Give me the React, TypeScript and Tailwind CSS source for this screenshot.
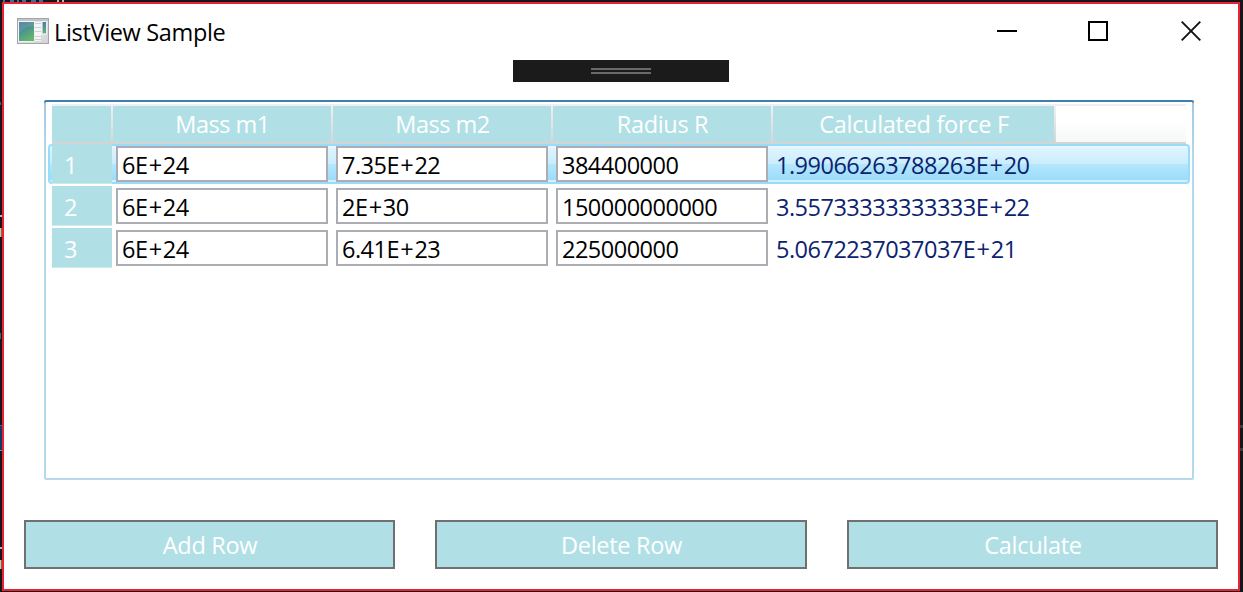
import React from "react";

const columns = [
  { title: "", width: "w-[59px]", tracking: "" },
  { title: "Mass m1", width: "w-[218px]", tracking: "tracking-[-0.5px]" },
  { title: "Mass m2", width: "w-[218px]", tracking: "tracking-[-0.5px]" },
  { title: "Radius R", width: "w-[218px]", tracking: "tracking-[-0.35px]" },
  { title: "Calculated force F", width: "w-[281px]", tracking: "tracking-[-0.3px]" },
];

const rows = [
  { values: ["6E+24", "7.35E+22", "384400000"], force: "1.99066263788263E+20" },
  { values: ["6E+24", "2E+30", "150000000000"], force: "3.55733333333333E+22" },
  { values: ["6E+24", "6.41E+23", "225000000"], force: "5.0672237037037E+21" },
];

const actions = [
  { label: "Add Row", width: "w-[371px]" },
  { label: "Delete Row", width: "w-[372px]" },
  { label: "Calculate", width: "w-[371px]" },
];

function Numeric({ value }: { value: string }) {
  const [mantissa, exponent] = value.split("E+");
  return (
    <>
      {mantissa}
      {exponent && (
        <>
          <span className="tracking-[0.7px]">E+</span>
          {exponent}
        </>
      )}
    </>
  );
}

function AppIcon() {
  return (
    <svg width="32" height="26" viewBox="0 0 32 26" className="block">
      <defs>
        <linearGradient id="pane" x1="0" y1="0" x2="0.5" y2="1">
          <stop offset="0" stopColor="#4674a6" />
          <stop offset="0.5" stopColor="#4c9490" />
          <stop offset="1" stopColor="#62b56c" />
        </linearGradient>
        <linearGradient id="frame" x1="0" y1="0" x2="1" y2="1">
          <stop offset="0" stopColor="#f4f4f4" />
          <stop offset="1" stopColor="#d0d2d6" />
        </linearGradient>
        <linearGradient id="bar" x1="0" y1="0" x2="0" y2="1">
          <stop offset="0" stopColor="#4a7cab" />
          <stop offset="1" stopColor="#63b577" />
        </linearGradient>
      </defs>
      <rect x="0.5" y="0.5" width="31" height="25" fill="url(#frame)" stroke="#a3a5a9" />
      <rect x="1" y="1" width="30" height="2" fill="#c3c5c8" />
      <rect x="1.5" y="3.5" width="16" height="20" fill="#fff" />
      <rect x="2" y="4" width="15" height="19" fill="url(#pane)" />
      <path d="M2 15C7 9 12 8 17 8V4H2z" fill="#fff" opacity="0.1" />
      <rect x="18" y="4" width="6" height="19" fill="#f5f5f5" />
      <path d="M18 5.5h6M18 9.5h6M18 13.5h6M18 18.5h6M18 21.5h6" stroke="#cfd0d2" />
      <rect x="24.5" y="3.5" width="5" height="13" fill="#fff" />
      <rect x="25.5" y="4" width="3.5" height="11.5" fill="url(#bar)" />
    </svg>
  );
}

function WindowButtons() {
  return (
    <div className="flex items-center pt-[17px]">
      <svg width="20" height="20" className="mr-[71px] block">
        <path d="M0 10h20" stroke="#000" strokeWidth="2" />
      </svg>
      <svg width="20" height="20" className="mr-[73px] block">
        <rect x="1" y="1" width="18" height="18" fill="none" stroke="#000" strokeWidth="2" />
      </svg>
      <svg width="20" height="20" className="mr-[37px] block">
        <path d="M0.7 0.7l18.6 18.6M19.3 0.7L0.7 19.3" stroke="#111" strokeWidth="1.9" />
      </svg>
    </div>
  );
}

function BackdropEdge() {
  return (
    <svg width="2" height="592" className="block shrink-0">
      <rect y="102" width="1" height="3" fill="#2b6a85" />
      <rect y="215" width="2" height="2" fill="#b8b8b0" />
      <rect y="228" width="1" height="9" fill="#c9c4b0" />
      <rect x="1" y="228" width="1" height="9" fill="#8a6a35" />
      <rect y="333" width="1" height="6" fill="#2b7285" />
      <rect y="425" width="2" height="26" fill="#123a66" />
      <rect y="425" width="2" height="1" fill="#566478" />
      <rect y="450" width="2" height="1" fill="#7890a8" />
      <rect y="547" width="2" height="2" fill="#b8b8b0" />
      <rect y="560" width="1" height="9" fill="#c9c4b0" />
      <rect x="1" y="560" width="1" height="9" fill="#8a6a35" />
    </svg>
  );
}

export default function App() {
  return (
    <div className="flex h-[592px] w-[1243px] flex-col overflow-hidden bg-[#161616] font-['Open_Sans','Noto_Sans',sans-serif] text-[23.5px] leading-[32px]">
      <svg width="1243" height="2" className="block shrink-0">
        <path d="M3 1h2M10 1h4M17 1h2M22 1h4M31 1h5M39 1h4" stroke="#3f6f9c" strokeWidth="2" />
        <path d="M57 1h2M62 1h2" stroke="#b9b9a8" strokeWidth="2" />
      </svg>
      <div className="-mt-[2px] flex h-[592px]">
        <BackdropEdge />
        <main className="mt-[2px] flex h-[589px] w-[1238px] flex-col border-2 border-[#ea2238] bg-white">
          <header className="flex h-[56px] shrink-0 items-start">
            <div className="ml-[13px] mt-[14px]">
              <AppIcon />
            </div>
            <h1 className="ml-[5px] mt-[12px] flex-1 tracking-[-0.33px] text-black">ListView Sample</h1>
            <WindowButtons />
          </header>

          <div className="ml-[509px] flex h-[22px] w-[216px] shrink-0 flex-col items-center gap-[2px] bg-[#1b1b1b] pt-[8px]">
            <div className="h-[2px] w-[60px] bg-[#6a6a6a]" />
            <div className="h-[2px] w-[60px] bg-[#6a6a6a]" />
          </div>

          <section className="ml-[40px] mt-[18px] h-[380px] w-[1150px] shrink-0 rounded-[2px] bg-[linear-gradient(to_bottom,#3c7fb1_0,#3c7fb1_2px,#a3c8e2_3px,#b5d9ec_60px,#b5d9ec_100%)] p-[2px]">
            <div className="flex h-full flex-col bg-white px-[2px] pt-[2px]">
              <div className="mx-[4px] flex h-[40px] shrink-0 border-b-2 border-t-2 border-b-[#d4d4d4] border-t-[#f0f0f0] bg-[linear-gradient(to_bottom,#fff_0,#fff_40%,#f6f7f8_100%)]">
                {columns.map((c, i) => (
                  <React.Fragment key={i}>
                    <div className={`${c.width} ${c.tracking} h-[36px] bg-[#b0e0e6] pl-[1px] pt-[2px] text-center text-white`}>
                      {c.title}
                    </div>
                    <div className="h-[36px] w-[2px] bg-[linear-gradient(to_bottom,#f0f0f0,#d6d6d6)]" />
                  </React.Fragment>
                ))}
              </div>

              <div className="flex flex-col gap-[2px]">
                {rows.map((r, i) => (
                  <div
                    key={i}
                    className={`flex h-[40px] rounded-[4px] border-2 ${
                      i === 0
                        ? "border-[#98dcfb] bg-[linear-gradient(to_bottom,#e9f8fe_0,#e9f8fe_2px,#dff4fe_2px,#c9edfc_18px,#b5e7fd_18px,#9cdcfa_34px,#d2f1fe_34px,#d2f1fe_36px)]"
                        : "border-transparent"
                    }`}
                  >
                    <div className="-mt-[2px] ml-[2px] h-[40px] w-[60px] bg-[linear-gradient(to_bottom,#b0e0e6_39px,#cdebef_39px)] pl-[12px] pt-[5px] text-white">
                      {i + 1}
                    </div>
                    {r.values.map((v, j) => (
                      <div
                        key={j}
                        className="ml-[4px] mr-[4px] h-[36px] w-[212px] border-2 border-[#abadb3] bg-white pl-[4px] pt-[1px] tracking-[-0.5px] text-black"
                      >
                        <Numeric value={v} />
                      </div>
                    ))}
                    <div className="ml-[4px] pt-[3px] tracking-[-0.5px] text-[#0c2370]">
                      <Numeric value={r.force} />
                    </div>
                  </div>
                ))}
              </div>
            </div>
          </section>

          <footer className="ml-[20px] mt-[40px] flex gap-[40px]">
            {actions.map((a) => (
              <button
                key={a.label}
                className={`${a.width} flex h-[49px] shrink-0 items-center justify-center border-2 border-[#707070] bg-[#b0e0e6] pl-[1px] tracking-[-0.3px] text-white`}
              >
                {a.label}
              </button>
            ))}
          </footer>
        </main>
        <svg width="3" height="592" className="block shrink-0">
          <path d="M0 426.5h3M0 449.5h3" stroke="#3c3c3c" strokeWidth="3" />
        </svg>
      </div>
    </div>
  );
}
